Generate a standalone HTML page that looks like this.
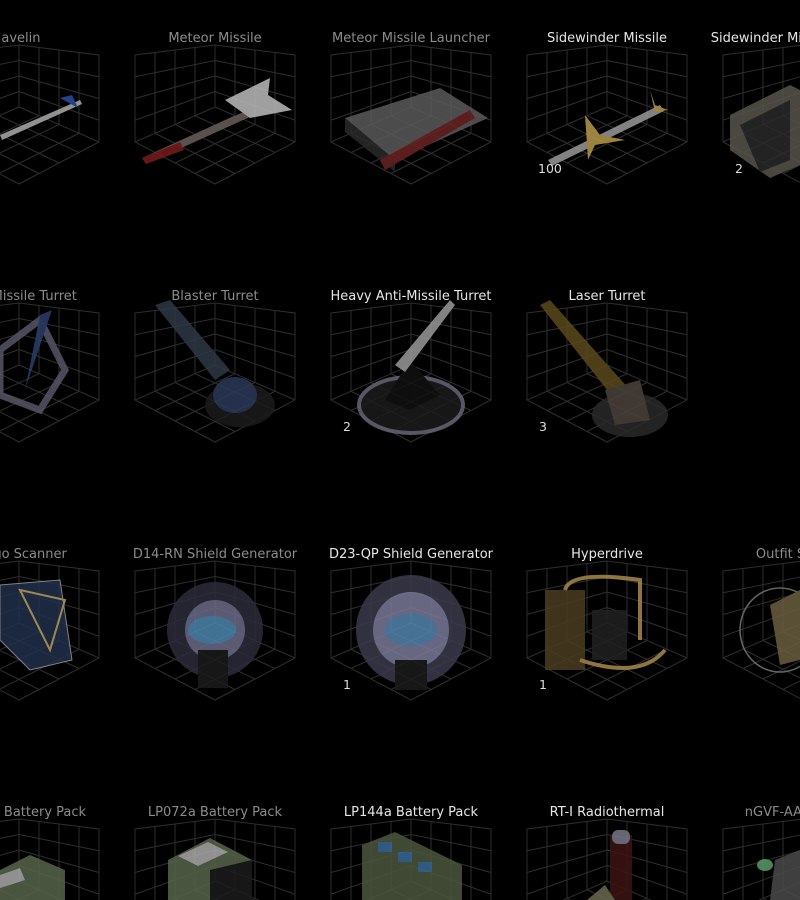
<!DOCTYPE html>
<html><head><meta charset="utf-8"><style>
html,body{margin:0;padding:0;background:#000;width:800px;height:900px;overflow:hidden;position:relative}
.l{position:absolute;width:240px;margin-left:-120px;text-align:center;font:13px "DejaVu Sans","Liberation Sans",sans-serif;color:#8c8c8c;line-height:16px;white-space:nowrap}
.w{color:#e6e6e6}
.c{position:absolute;font:12.5px "DejaVu Sans","Liberation Sans",sans-serif;color:#ddd}
svg{position:absolute;left:0;top:0}
</style></head><body>
<svg width="800" height="900" viewBox="0 0 800 900">
<defs>
<g id="g" fill="none" stroke="#2e2e2e" stroke-width="1">
<path d="M-80 10L0 0L80 10V97L0 139L-80 97Z M0 0V62L-80 97 M0 62L80 97"/>
<path d="M-20 2.5V70.75M-40 5V79.5M-60 7.5V88.25M0 15.5L-80 31.75M0 31L-80 53.5M0 46.5L-80 75.25"/>
<path d="M20 2.5V70.75M40 5V79.5M60 7.5V88.25M0 15.5L80 31.75M0 31L80 53.5M0 46.5L80 75.25"/>
<path d="M20 70.75L-60 107.5M40 79.5L-40 118M60 88.25L-20 128.5M-20 70.75L60 107.5M-40 79.5L40 118M-60 88.25L20 128.5"/>
</g>
</defs>
<use href="#g" x="19" y="45"/><use href="#g" x="215" y="45"/><use href="#g" x="411" y="45"/><use href="#g" x="607" y="45"/><use href="#g" x="803" y="45"/>
<use href="#g" x="19" y="303"/><use href="#g" x="215" y="303"/><use href="#g" x="411" y="303"/><use href="#g" x="607" y="303"/>
<use href="#g" x="19" y="561"/><use href="#g" x="215" y="561"/><use href="#g" x="411" y="561"/><use href="#g" x="607" y="561"/><use href="#g" x="803" y="561"/>
<use href="#g" x="19" y="819"/><use href="#g" x="215" y="819"/><use href="#g" x="411" y="819"/><use href="#g" x="607" y="819"/><use href="#g" x="803" y="819"/>
<g opacity="0.85">
<path d="M0 135L80 100L82 104L2 140Z" fill="#aaa"/><path d="M60 98L72 95L78 108Z" fill="#2a4fa0"/>
<path d="M142 158L270 100L274 106L146 164Z" fill="#6a5e5c"/><path d="M142 158L180 142L184 150L146 164Z" fill="#7a1c1c"/><path d="M225 100L270 78L268 95L292 110L250 118Z" fill="#bbb"/>
<path d="M345 118L440 88L488 118L395 160Z" fill="#5a5a5a"/><path d="M345 118L395 160V172L345 132Z" fill="#2a2a2a"/><path d="M380 160L470 110L475 118L385 170Z" fill="#6a2424"/>
<path d="M548 160L660 105L664 111L552 166Z" fill="#999"/><path d="M585 115L600 135L625 140L595 145L588 160Z" fill="#b89a48"/><path d="M650 90L655 105L668 110L655 112Z" fill="#b89a48"/>
<path d="M730 115L790 85L800 90V165L770 178L730 150Z" fill="#56544c"/><path d="M740 125L790 100V160L760 172Z" fill="#2a2a2a"/>
<path d="M0 350L40 320L65 370L40 410L0 395Z" fill="none" stroke="#556" stroke-width="7"/><path d="M40 315L52 310L25 390Z" fill="#2c3e6a"/>
<path d="M155 305L170 300L230 370L215 380Z" fill="#2e3846"/><ellipse cx="240" cy="405" rx="35" ry="22" fill="#1c1c1c"/><ellipse cx="235" cy="395" rx="22" ry="18" fill="#2c3a5a"/>
<ellipse cx="411" cy="405" rx="52" ry="28" fill="#1c1c1c" stroke="#667" stroke-width="4"/><path d="M385 400L410 360L440 395L410 410Z" fill="#111"/><path d="M395 365L450 300L455 305L405 372Z" fill="#999"/>
<path d="M540 305L550 300L630 390L615 400Z" fill="#5a4a1c"/><ellipse cx="630" cy="415" rx="38" ry="22" fill="#2a2a2a"/><path d="M605 390L640 380L650 420L615 425Z" fill="#4a423c"/>
<path d="M0 585L60 580L72 660L30 670L0 640Z" fill="#22304a" stroke="#999" stroke-width="1"/><path d="M20 590L65 600L50 650Z" fill="none" stroke="#b8a060" stroke-width="2"/>
<circle cx="215" cy="630" r="48" fill="#2c2c3a"/><circle cx="215" cy="630" r="30" fill="#6a6a88"/><ellipse cx="212" cy="630" rx="24" ry="14" fill="#3a9ac8" opacity=".6"/><rect x="198" y="650" width="30" height="38" fill="#1c1c1c"/>
<circle cx="411" cy="630" r="55" fill="#3a3a4c"/><circle cx="411" cy="630" r="38" fill="#7a7a98"/><ellipse cx="411" cy="630" rx="26" ry="16" fill="#3a8ac0" opacity=".6"/><rect x="395" y="660" width="32" height="30" fill="#1c1c1c"/>
<rect x="545" y="590" width="40" height="80" fill="#4a3c20"/><rect x="592" y="610" width="35" height="50" fill="#222"/><path d="M565 590Q570 570 640 580V640M580 660Q640 680 665 650" fill="none" stroke="#a88a48" stroke-width="4"/>
<ellipse cx="780" cy="630" rx="40" ry="42" fill="none" stroke="#777" stroke-width="1.5"/><path d="M770 605L800 590V660L780 665Z" fill="#6a5e40"/>
<path d="M0 870L30 855L65 870V900H0Z" fill="#56644a"/><path d="M0 875L20 868L25 880L0 888Z" fill="#aaa"/>
<path d="M168 860L210 838L252 860V900H168Z" fill="#56644a"/><path d="M178 856L208 842L228 852L198 866Z" fill="#aaa"/><path d="M210 870L252 860V900H210Z" fill="#1c1c1c"/>
<path d="M362 845L395 832L462 865V900H362Z" fill="#4a563c"/><rect x="378" y="842" width="14" height="10" fill="#3a6a9a"/><rect x="398" y="852" width="14" height="10" fill="#3a6a9a"/><rect x="418" y="862" width="14" height="10" fill="#3a6a9a"/>
<rect x="610" y="835" width="22" height="65" fill="#3c1414"/><rect x="612" y="830" width="18" height="14" rx="6" fill="#778"/><path d="M587 900L605 885L615 900Z" fill="#6a6a50"/>
<path d="M775 860L800 850V900H770Z" fill="#4a4a4a"/><ellipse cx="765" cy="865" rx="8" ry="6" fill="#5a9a6a"/>
</g>
</svg>
<div class="l" style="left:19px;top:31px">Javelin</div>
<div class="l" style="left:215px;top:31px">Meteor Missile</div>
<div class="l" style="left:411px;top:31px">Meteor Missile Launcher</div>
<div class="l w" style="left:607px;top:31px">Sidewinder Missile</div>
<div class="l w" style="left:803px;top:31px">Sidewinder Missile Launcher</div>
<div class="l" style="left:19px;top:289px">Anti-Missile Turret</div>
<div class="l" style="left:215px;top:289px">Blaster Turret</div>
<div class="l w" style="left:411px;top:289px">Heavy Anti-Missile Turret</div>
<div class="l w" style="left:607px;top:289px">Laser Turret</div>
<div class="l" style="left:19px;top:547px">Cargo Scanner</div>
<div class="l" style="left:215px;top:547px">D14-RN Shield Generator</div>
<div class="l w" style="left:411px;top:547px">D23-QP Shield Generator</div>
<div class="l w" style="left:607px;top:547px">Hyperdrive</div>
<div class="l" style="left:803px;top:547px">Outfit Scanner</div>
<div class="l" style="left:19px;top:805px">LP036a Battery Pack</div>
<div class="l" style="left:215px;top:805px">LP072a Battery Pack</div>
<div class="l w" style="left:411px;top:805px">LP144a Battery Pack</div>
<div class="l w" style="left:607px;top:805px">RT-I Radiothermal</div>
<div class="l" style="left:803px;top:805px">nGVF-AA Fuel Cell</div>
<div class="c" style="left:538px;top:161px">100</div>
<div class="c" style="left:735px;top:161px">2</div>
<div class="c" style="left:343px;top:419px">2</div>
<div class="c" style="left:539px;top:419px">3</div>
<div class="c" style="left:343px;top:677px">1</div>
<div class="c" style="left:539px;top:677px">1</div>
</body></html>
